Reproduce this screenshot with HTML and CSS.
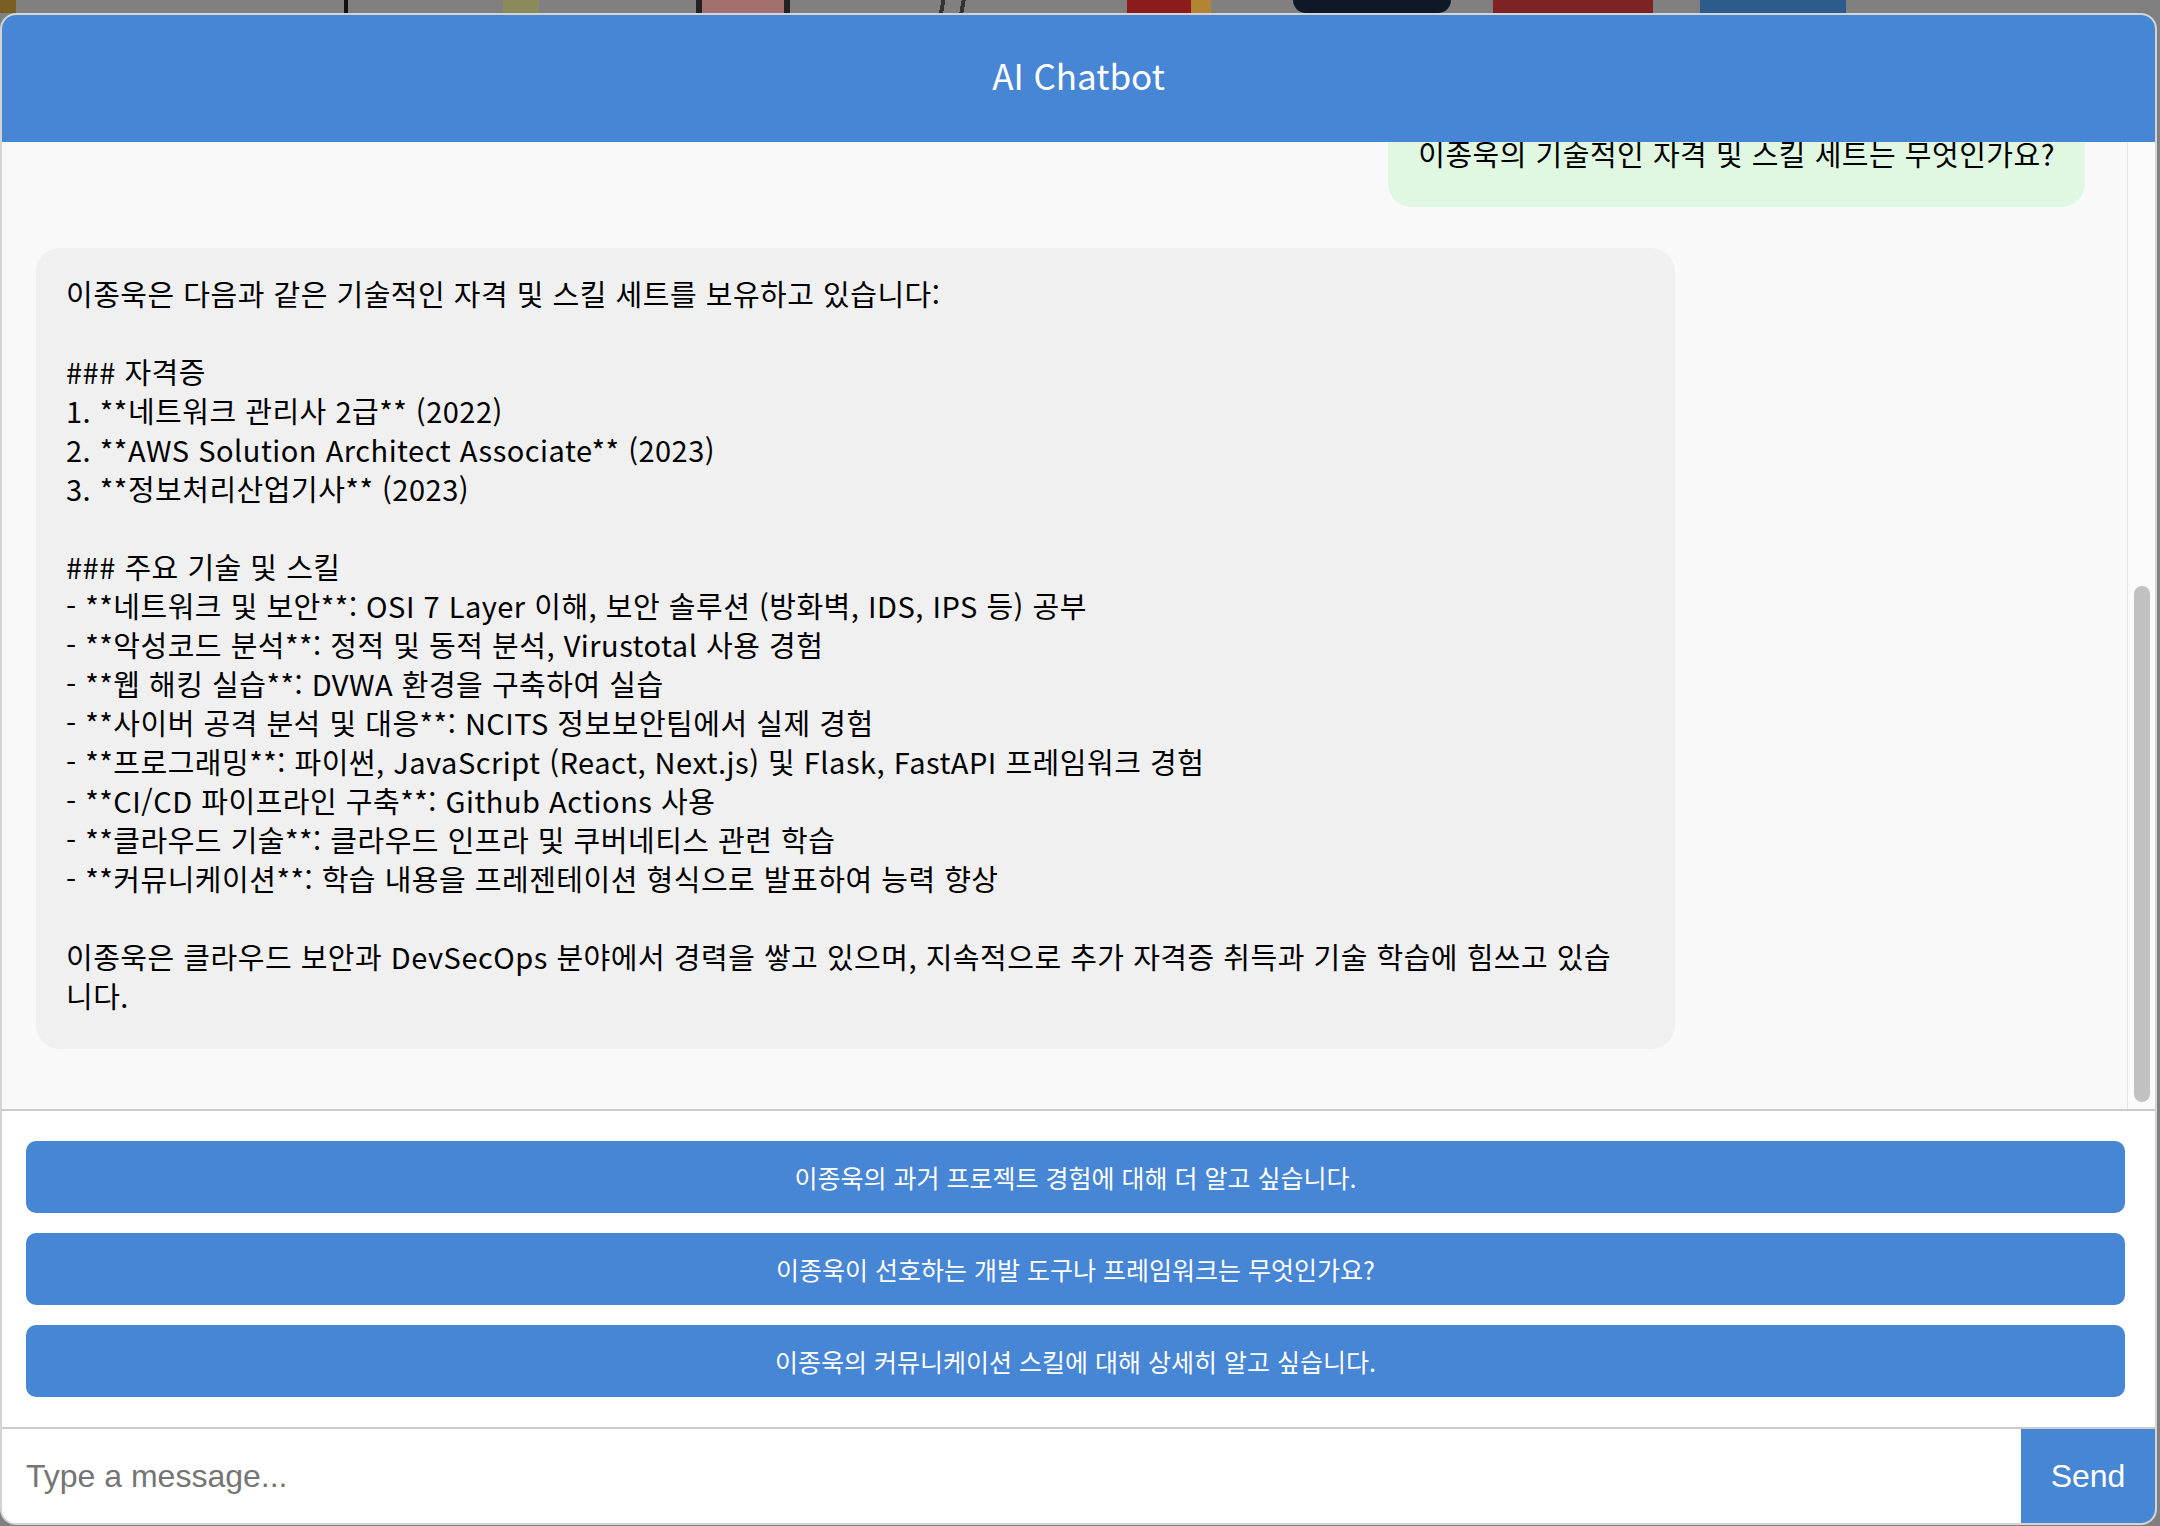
FILE: index.html
```html
<!DOCTYPE html>
<html lang="ko">
  <head>
    <meta charset="UTF-8" />
    <meta name="viewport" content="width=device-width, initial-scale=1.0" />
    <title>AI Chatbot</title>
    <link rel="stylesheet" href="styles.css">
  </head>
  <body>
    <div class="backdrop">
      <span class="chunk chunk-brown"></span>
      <span class="chunk chunk-line"></span>
      <span class="chunk chunk-olive"></span>
      <span class="chunk chunk-face"></span>
      <span class="chunk chunk-strokes"></span>
      <span class="chunk chunk-red"></span>
      <span class="chunk chunk-navy"></span>
      <span class="chunk chunk-red2"></span>
      <span class="chunk chunk-blue"></span>
    </div>

    <div class="chat-window">
      <div class="chat-header">AI Chatbot</div>

      <div class="chat-body">
        <div class="messages">
          <div class="message user-message">이종욱의 기술적인 자격 및 스킬 세트는 무엇인가요?</div>
          <div class="message bot-message">이종욱은 다음과 같은 기술적인 자격 및 스킬 세트를 보유하고 있습니다:<br><br>### 자격증<br>1. **네트워크 관리사 2급** (2022)<br>2. **AWS Solution Architect Associate** (2023)<br>3. **정보처리산업기사** (2023)<br><br>### 주요 기술 및 스킬<br>- **네트워크 및 보안**: OSI 7 Layer 이해, 보안 솔루션 (방화벽, IDS, IPS 등) 공부<br>- **악성코드 분석**: 정적 및 동적 분석, Virustotal 사용 경험<br>- **웹 해킹 실습**: DVWA 환경을 구축하여 실습<br>- **사이버 공격 분석 및 대응**: NCITS 정보보안팀에서 실제 경험<br>- **프로그래밍**: 파이썬, JavaScript (React, Next.js) 및 Flask, FastAPI 프레임워크 경험<br>- **CI/CD 파이프라인 구축**: Github Actions 사용<br>- **클라우드 기술**: 클라우드 인프라 및 쿠버네티스 관련 학습<br>- **커뮤니케이션**: 학습 내용을 프레젠테이션 형식으로 발표하여 능력 향상<br><br>이종욱은 클라우드 보안과 DevSecOps 분야에서 경력을 쌓고 있으며, 지속적으로 추가 자격증 취득과 기술 학습에 힘쓰고 있습<br>니다.</div>
        </div>
        <div class="scroll-track">
          <div class="scroll-thumb"></div>
        </div>
      </div>

      <div class="suggestions">
        <button class="suggestion-button" type="button">이종욱의 과거 프로젝트 경험에 대해 더 알고 싶습니다.</button>
        <button class="suggestion-button" type="button">이종욱이 선호하는 개발 도구나 프레임워크는 무엇인가요?</button>
        <button class="suggestion-button" type="button">이종욱의 커뮤니케이션 스킬에 대해 상세히 알고 싶습니다.</button>
      </div>

      <form class="input-row" id="chatForm">
        <input type="text" class="message-input" placeholder="Type a message..." />
        <button type="submit" class="send-button">Send</button>
      </form>
    </div>
  </body>
</html>
```

FILE: styles.css
```css
body,
html {
  margin: 0;
  padding: 0;
  font-family: "Noto Sans CJK KR", "Noto Sans", sans-serif;
  background-color: #808080;
  color: #000000;
  overflow: hidden;
}

.backdrop {
  display: flex;
  height: 13px;
  overflow: hidden;
}

.chunk {
  display: block;
  height: 13px;
}

.chunk-brown {
  width: 16px;
  background-color: #7a5f22;
}

.chunk-line {
  width: 4px;
  margin-left: 328px;
  background-color: #111111;
}

.chunk-olive {
  width: 36px;
  margin-left: 155px;
  background-color: #8b8a5a;
}

.chunk-face {
  width: 100px;
  margin-left: 157px;
  background: linear-gradient(90deg, #222 0 6px, #a36f6f 6px 88px, #222 88px 94px, transparent 94px);
}

.chunk-strokes {
  width: 68px;
  margin-left: 125px;
  background: linear-gradient(100deg, transparent 0 20px, #333 20px 24px, transparent 24px 40px, #333 40px 44px, transparent 44px);
}

.chunk-red {
  width: 84px;
  margin-left: 138px;
  background: linear-gradient(90deg, #8c1c1c 0 64px, #b38433 64px);
}

.chunk-navy {
  width: 158px;
  margin-left: 82px;
  background-color: #0e1826;
  border-radius: 0 0 60px 60px;
}

.chunk-red2 {
  width: 160px;
  margin-left: 42px;
  background-color: #7e2323;
}

.chunk-blue {
  width: 146px;
  margin-left: 47px;
  background-color: #2b5c8c;
}

.chat-window {
  width: 2157px;
  height: 1512px;
  box-sizing: border-box;
  border: 2px solid #d4d4d4;
  border-radius: 16px;
  overflow: hidden;
  background-color: #ffffff;
  display: flex;
  flex-direction: column;
}

.chat-header {
  height: 127px;
  box-sizing: border-box;
  padding-bottom: 8px;
  flex-shrink: 0;
  background-color: #4785d5;
  color: #ffffff;
  font-size: 35px;
  display: flex;
  align-items: center;
  justify-content: center;
}

.chat-body {
  flex: 1;
  min-height: 0;
  display: flex;
  background-color: #f9f9f9;
  border-bottom: 2px solid #cccccc;
}

.messages {
  flex: 1;
  min-width: 0;
  overflow: hidden;
  display: flex;
  flex-direction: column;
  justify-content: flex-end;
  gap: 41px;
  padding: 0 42px 60px 34px;
}

.message {
  max-width: 80%;
  padding: 26px 30px 34px;
  border-radius: 24px;
  font-size: 29px;
  letter-spacing: 0.5px;
  line-height: 39px;
  flex-shrink: 0;
  box-sizing: border-box;
}

.user-message {
  align-self: flex-end;
  background-color: #e0f7e1;
}

.bot-message {
  align-self: flex-start;
  width: 80%;
  background-color: #f0f0f0;
}

.scroll-track {
  width: 27px;
  flex-shrink: 0;
  border-left: 1px solid #e6e6e6;
  background-color: #fafafa;
  display: flex;
  flex-direction: column;
  align-items: center;
}

.scroll-thumb {
  width: 16px;
  height: 516px;
  margin-top: 444px;
  border-radius: 8px;
  background-color: #c1c1c1;
}

.suggestions {
  flex-shrink: 0;
  display: flex;
  flex-direction: column;
  gap: 20px;
  padding: 30px 30px 30px 24px;
  border-bottom: 2px solid #cccccc;
}

.suggestion-button {
  height: 72px;
  border: none;
  border-radius: 10px;
  background-color: #4785d5;
  color: #ffffff;
  font-family: "Noto Sans CJK KR", "Noto Sans", sans-serif;
  font-size: 25px;
  cursor: pointer;
}

.input-row {
  height: 94px;
  flex-shrink: 0;
  margin: 0;
  display: flex;
}

.message-input {
  flex: 1;
  border: none;
  padding: 0 24px;
  font-family: "Liberation Sans", Arial, sans-serif;
  font-size: 32px;
  color: #333333;
  background-color: #ffffff;
}

.message-input::placeholder {
  color: #757575;
}

.message-input:focus {
  outline: none;
}

.send-button {
  width: 134px;
  border: none;
  background-color: #4785d5;
  color: #ffffff;
  font-family: "Liberation Sans", Arial, sans-serif;
  font-size: 32px;
  cursor: pointer;
}
```
